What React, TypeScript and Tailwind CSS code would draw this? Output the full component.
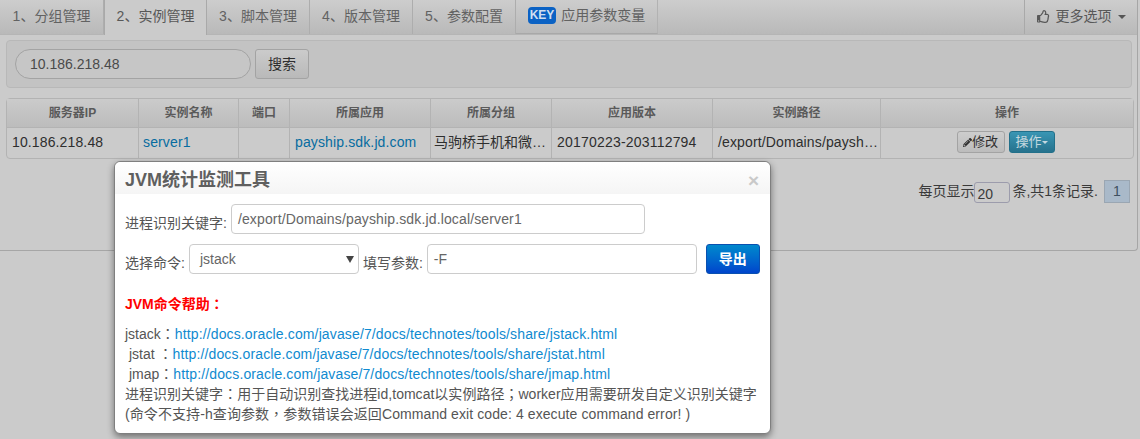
import React from "react";
import { FaRegThumbsUp, FaPencilAlt } from "react-icons/fa";

const font = { fontFamily: '"Liberation Sans", "Noto Sans CJK SC", sans-serif' };

const tabs = ["1、分组管理", "2、实例管理", "3、脚本管理", "4、版本管理", "5、参数配置"];

const headers = [
  { label: "服务器IP", w: "w-[132px]" },
  { label: "实例名称", w: "w-[100px]" },
  { label: "端口", w: "w-[51px]" },
  { label: "所属应用", w: "w-[141px]" },
  { label: "所属分组", w: "w-[121px]" },
  { label: "应用版本", w: "w-[161px]" },
  { label: "实例路径", w: "w-[168px]" },
  { label: "操作", w: "w-[252px]" },
];

const docs = [
  { name: "jstack", gap: "", file: "jstack", pad: "" },
  { name: "jstat", gap: " ", file: "jstat", pad: "pl-[4px]" },
  { name: "jmap", gap: "", file: "jmap", pad: "pl-[4px]" },
];

// the reference draws full-width punctuation centred in its box
const P = ({ c }: { c: string }) => <span className="leading-[0] [font-family:'Noto_Sans_CJK_TC',sans-serif]">{c}</span>;

const App = () => {
  return (
    <div className="relative w-[1140px] h-[439px] overflow-hidden bg-[#cbcbcb] text-[14px] text-[#2e2e2e]" style={font}>
      <div className="w-[1138px] h-[251px] border-r border-b border-[#a6a6a6] rounded-br-[4px] bg-[#cbcbcb]">
        {/* tabs */}
        <div className="flex h-[35px]">
          <div className="flex flex-1 bg-gradient-to-b from-[#cdcdcd] to-[#b9b9b9] border-b border-[#b5b5b5]">
            {tabs.map((t, i) =>
              i === 1 ? (
                <div key={t} className="w-[103px] h-[35px] -mb-px pb-[2px] flex items-center justify-center bg-[#cbcbcb] border-x border-[#a9a9a9] text-[#585858]">
                  {t}
                </div>
              ) : (
                <div key={t} className={`${i === 0 ? "w-[104px]" : "w-[103px]"} pb-[2px] flex items-center justify-center border-r border-[#adadad] text-[#626262]`}>
                  {t}
                </div>
              )
            )}
            <div className="w-[142px] pb-[2px] flex items-center justify-center border-r border-[#b2b2b2] border-b border-b-[#a8a8a8] text-[#626262]">
              <span className="bg-[#0b62c4] text-[#cfdff0] text-[12px] font-bold rounded-[4px] px-[2px] h-[17px] leading-[17px] mr-[5px]">KEY</span>
              <span>应用参数变量</span>
            </div>
            <div className="flex-1" />
            <div className="w-[113px] pb-[1px] flex items-center justify-center gap-[6px] border-l border-[#a9a9a9] text-[#585858]">
              <FaRegThumbsUp className="text-[13px]" />
              <span>更多选项</span>
              <span className="border-x-[4px] border-x-transparent border-t-[4px] border-t-[#555]" />
            </div>
          </div>
        </div>

        {/* search */}
        <div className="mt-[5px] ml-[6px] w-[1126px] h-[48px] bg-[#c3c3c3] border border-[#b8b8b8] rounded-[4px] flex items-center pl-[8px] gap-[4px]">
          <div className="w-[236px] h-[30px] rounded-full border border-[#a3a3a3] bg-[#c6c6c6] pl-[14px] flex items-center text-[#4a4a4a]">
            10.186.218.48
          </div>
          <div className="w-[54px] h-[30px] rounded-[3px] border border-[#a3a3a3] bg-gradient-to-b from-[#cbcbcb] to-[#b9b9b9] flex items-center justify-center text-[#2e2e2e]">
            搜索
          </div>
        </div>

        {/* table */}
        <table className="mt-[10px] ml-[6px] w-[1126px] table-fixed border-separate border-spacing-0 border border-[#b3b3b3] rounded-[4px]">
          <thead>
            <tr className="h-[29px]">
              {headers.map((h, i) => (
                <th
                  key={h.label}
                  className={`${h.w} ${i < 7 ? "border-r" : ""} border-b border-[#b3b3b3] bg-gradient-to-b from-[#cbcbcb] to-[#bcbcbc] pb-[1px] text-[12px] font-bold text-[#5a5a5a] text-center`}
                >
                  {h.label}
                </th>
              ))}
            </tr>
          </thead>
          <tbody>
            <tr className="h-[30px] tracking-[0.13px]">
              <td className="border-r border-[#b3b3b3] pl-[5px] pb-[2px]">10.186.218.48</td>
              <td className="border-r border-[#b3b3b3] pl-[4px] pb-[2px] text-[#066ca0]">server1</td>
              <td className="border-r border-[#b3b3b3]" />
              <td className="border-r border-[#b3b3b3] pl-[5px] pb-[2px] text-[#066ca0] whitespace-nowrap">payship.sdk.jd.com</td>
              <td className="border-r border-[#b3b3b3] pl-[3px] pb-[2px] tracking-normal whitespace-nowrap">马驹桥手机和微…</td>
              <td className="border-r border-[#b3b3b3] pl-[5px] pb-[2px] tracking-[0.2px] whitespace-nowrap">20170223-203112794</td>
              <td className="border-r border-[#b3b3b3] pl-[5px] pb-[2px] whitespace-nowrap">/export/Domains/paysh…</td>
              <td>
                <div className="flex items-center justify-center gap-[4px] pr-[3px] mb-[2px] tracking-normal">
                  <div className="w-[48px] h-[22px] rounded-[3px] border border-[#a3a3a3] bg-gradient-to-b from-[#cdcdcd] to-[#bcbcbc] flex items-center justify-center text-[13px]">
                    <FaPencilAlt className="text-[9px]" />
                    <span>修改</span>
                  </div>
                  <div className="w-[46px] h-[22px] rounded-[3px] border border-[#22708a] bg-gradient-to-b from-[#3a96b4] to-[#26728d] flex items-center justify-center text-[13px] text-[#c5d8df]">
                    <span>操作</span>
                    <span className="border-x-[3px] border-x-transparent border-t-[3px] border-t-[#c5d8df]" />
                  </div>
                </div>
              </td>
            </tr>
          </tbody>
        </table>

        {/* pagination */}
        <div className="mt-[21px] mr-[7px] flex items-center justify-end text-[#3a3a3a]">
          <span>每页显示</span>
          <span className="w-[36px] h-[21px] mt-[1px] rounded-[3px] border border-[#9c9cac] pl-[2px] leading-[22px]">20</span>
          <span className="ml-[2px]">条,共1条记录.</span>
          <span className="ml-[6px] w-[26px] h-[23px] border border-[#9aa6b2] bg-[#a9b9c9] flex items-center justify-center text-[#3f5060]">1</span>
        </div>
      </div>

      {/* modal */}
      <div className="absolute left-[114px] top-[161px] w-[657px] h-[273px] bg-white rounded-[6px] border border-[#7f7f7f] shadow-[0_3px_7px_rgba(0,0,0,0.45)] text-[#555]">
        <div className="h-[32px] rounded-t-[6px] bg-gradient-to-b from-white to-[#f5f5f5] flex items-center justify-between pl-[10px] pr-[11px]">
          <span className="text-[18px] font-bold text-[#5f5f5f] mt-[4px]">JVM统计监测工具</span>
          <span className="text-[19px] font-bold text-[#c9c9c9] leading-none mt-[4px]">×</span>
        </div>
        <div className="px-[10px]">
          <div className="flex items-end mt-[10px] h-[30px]">
            <span>进程识别关键字:</span>
            <div className="ml-[4px] w-[414px] h-[30px] border border-[#ccc] rounded-[4px] flex items-center pl-[6px] tracking-[0.14px] text-[#666]">
              /export/Domains/payship.sdk.jd.local/server1
            </div>
          </div>
          <div className="flex items-end mt-[10px] h-[30px]">
            <span>选择命令:</span>
            <div className="relative ml-[4px] w-[170px] h-[30px] border border-[#ccc] rounded-[4px] flex items-center pl-[10px] text-[#666]">
              jstack
              <span className="absolute right-[4px] top-[11px] border-x-[4px] border-x-transparent border-t-[7px] border-t-[#444]" />
            </div>
            <span className="ml-[4px]">填写参数:</span>
            <div className="ml-[4px] w-[270px] h-[30px] border border-[#ccc] rounded-[4px] flex items-center pl-[6px] text-[#666]">
              -F
            </div>
            <div className="ml-[9px] w-[54px] h-[30px] rounded-[3px] border border-[#0a50b0] bg-gradient-to-b from-[#0088cc] to-[#0044cc] text-white flex items-center justify-center font-bold text-[14px]">
              导出
            </div>
          </div>
          <div className="mt-[20px] text-[#ff0000] font-bold text-[14px] leading-[20px]">
            JVM命令帮助<P c="：" />
          </div>
          <div className="mt-[10px] text-[14px] leading-[20px]">
            {docs.map((d) => (
              <div key={d.file} className={`${d.pad} whitespace-pre`}>
                {d.name}
                {d.gap}
                <P c="：" />
                <span className="text-[#0f8ad0] tracking-[0.13px]">http://docs.oracle.com/javase/7/docs/technotes/tools/share/{d.file}.html</span>
              </div>
            ))}
            <div className="whitespace-nowrap tracking-[0.02px]">
              进程识别关键字<P c="：" />用于自动识别查找进程id,tomcat以实例路径<P c="；" />worker应用需要研发自定义识别关键字
            </div>
            <div className="whitespace-nowrap tracking-[0.09px]">
              (命令不支持-h查询参数<P c="，" />参数错误会返回Command exit code: 4 execute command error! )
            </div>
          </div>
        </div>
      </div>
    </div>
  );
};

export default App;
